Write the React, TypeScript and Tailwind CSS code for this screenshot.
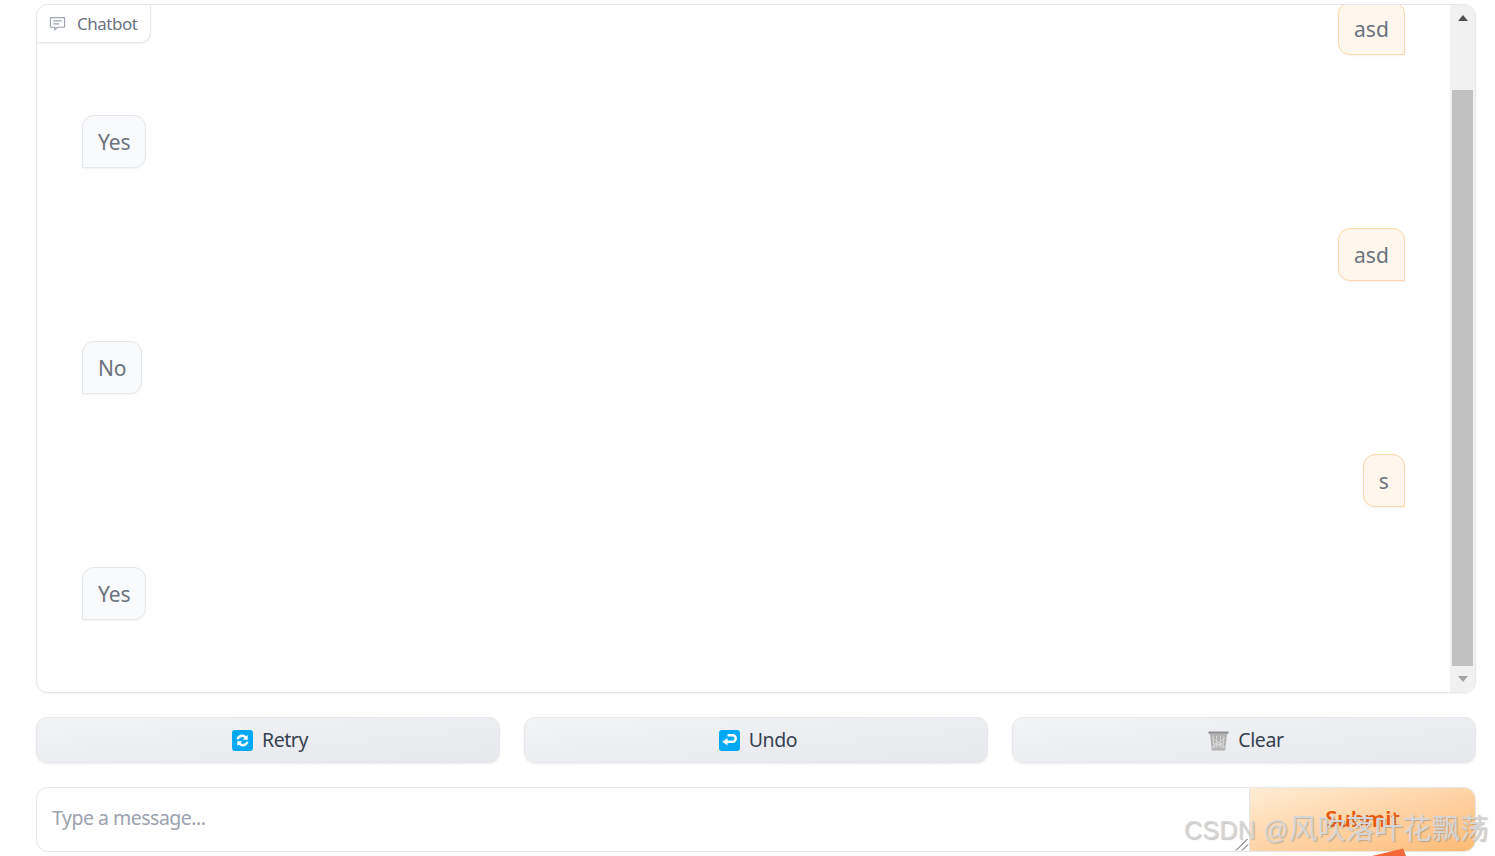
import React from "react";

const font = { fontFamily: '"Noto Sans", "Noto Sans CJK SC", sans-serif' };

function Bubble({ text, user }: { text: string; user?: boolean }) {
  return user ? (
    <div className="self-end mr-[45px] h-[53px] flex items-center px-[15px] pt-[2px] rounded-[12px] rounded-br-none border border-[#fed7aa] bg-[#fff7ed] shadow-[0_1px_2px_rgba(0,0,0,0.05)] text-[21px] text-[#6b7280] tracking-[0.1px]">
      {text}
    </div>
  ) : (
    <div className="self-start ml-[45px] h-[53px] flex items-center px-[15px] pt-[2px] rounded-[12px] rounded-bl-none border border-[#e5e7eb] bg-[#f9fafb] shadow-[0_1px_2px_rgba(0,0,0,0.05)] text-[21px] text-[#6b7280] tracking-[-0.1px]">
      {text}
    </div>
  );
}

function ChatIcon() {
  return (
    <svg width="17" height="17" viewBox="0 0 16 16" fill="none" stroke="#9ca3af" strokeWidth="1.1">
      <path d="M2 2.500h12a.7.7 0 0 1 .7.7v7.600a.7.7 0 0 1-.7.7H8l-2.600 2.400v-2.400H2a.7.7 0 0 1-.7-.7V3.200a.7.7 0 0 1 .7-.7z" />
      <path d="M4 5.500h8M4 8.300h5.500" />
    </svg>
  );
}

function RetryIcon() {
  return (
    <svg width="21" height="21" viewBox="0 0 21 21">
      <rect width="21" height="21" rx="3" fill="#03a9f4" />
      <path d="M4.500 9.300a5.800 5.800 0 0 1 9.800-3l1.400-1.300v4.800h-4.900l1.700-1.600a3.500 3.500 0 0 0-5.800 1.100z" fill="#fff" />
      <path d="M16.500 11.700a5.800 5.800 0 0 1-9.800 3l-1.400 1.300v-4.800h4.900l-1.700 1.600a3.500 3.500 0 0 0 5.800-1.100z" fill="#fff" />
    </svg>
  );
}

function UndoIcon() {
  return (
    <svg width="21" height="21" viewBox="0 0 21 21">
      <rect width="21" height="21" rx="3" fill="#03a9f4" />
      <path d="M8.500 5.200H13.500a3.300 3.300 0 0 1 0 6.600H7" fill="none" stroke="#fff" strokeWidth="2.400" />
      <path d="M8.500 8v7.600L3.300 11.800z" fill="#fff" />
    </svg>
  );
}

function TrashIcon() {
  return (
    <svg width="21" height="21" viewBox="0 0 21 21">
      <path d="M.5 1.500h20v2.300h-20z" fill="#8f8f8f" />
      <path d="M2 3.800h17l-1.700 16a1 1 0 0 1-1 .7H4.700a1 1 0 0 1-1-.7z" fill="#b0b0b0" />
      <path d="M5 5.500l1.200 13M8.500 5.500l.4 13M12.500 5.500l-.4 13M16 5.500l-1.200 13M4 8l13 9M17 8L4 17M4.500 12.500l12 5M16.500 12.500l-12 5" stroke="#dedede" strokeWidth=".8" fill="none" />
    </svg>
  );
}

function ActionButton({ icon, label }: { icon: React.ReactNode; label: string }) {
  return (
    <button className="flex-1 h-[46px] flex items-center justify-center gap-[9px] pl-[4px] rounded-[11px] border border-[#e5e7eb] bg-gradient-to-br from-[#f3f4f6] to-[#e5e7eb] shadow-[0_1px_2px_rgba(0,0,0,0.08)] text-[#374151] text-[19.5px] tracking-[-0.4px]">
      {icon}
      <span>{label}</span>
    </button>
  );
}

export default function App() {
  return (
    <div style={font} className="relative w-[1495px] h-[856px] overflow-hidden bg-white pl-[36px] pr-[19px] pt-[4px]">
      <div className="relative h-[689px] flex rounded-[12px] border border-[#e5e7eb] shadow-[0_1px_2px_rgba(0,0,0,0.05)] overflow-hidden bg-white">
        <div className="absolute left-0 top-0 h-[38px] w-[114px] flex items-center gap-[11px] pl-[12px] rounded-br-[10px] border-r border-b border-[#e5e7eb] bg-white shadow-[0_1px_2px_rgba(0,0,0,0.05)] text-[#6b7280] text-[17px] tracking-[-0.5px]">
          <ChatIcon />
          <span>Chatbot</span>
        </div>
        <div className="flex-1 flex flex-col gap-[60px] -mt-[3px] overflow-hidden">
          <Bubble text="asd" user />
          <Bubble text="Yes" />
          <Bubble text="asd" user />
          <Bubble text="No" />
          <Bubble text="s" user />
          <Bubble text="Yes" />
        </div>
        <div className="w-[25px] bg-[#f1f1f1] flex flex-col items-center">
          <div className="h-[85px] w-full pt-[10px] flex justify-center">
            <div className="w-0 h-0 border-x-[5.500px] border-x-transparent border-b-[6px] border-b-[#505050]" />
          </div>
          <div className="w-[21px] h-[576px] bg-[#c1c1c1]" />
          <div className="w-0 h-0 mt-[10px] border-x-[5.500px] border-x-transparent border-t-[6px] border-t-[#a3a3a3]" />
        </div>
      </div>

      <div className="mt-[24px] flex gap-[24px]">
        <ActionButton icon={<RetryIcon />} label="Retry" />
        <ActionButton icon={<UndoIcon />} label="Undo" />
        <ActionButton icon={<TrashIcon />} label="Clear" />
      </div>

      <div className="mt-[24px] h-[65px] flex rounded-[12px] border border-[#e5e7eb] overflow-hidden bg-white">
        <textarea
          placeholder="Type a message..."
          className="flex-1 h-full resize-none px-[15px] py-[16px] outline-none text-[19.5px] leading-[28px] tracking-[-0.5px] text-[#374151] placeholder:text-[#9ca3af]"
        />
        <button className="w-[226px] h-full flex items-center justify-center pb-[2px] bg-gradient-to-br from-[#ffedd5] to-[#fdba74] border-l border-[#e5e7eb] text-[#ea580c] text-[22px] font-semibold tracking-[-0.3px]">
          Submit
        </button>
      </div>

      <svg className="absolute left-[1235px] top-[838px]" width="14" height="13" viewBox="0 0 14 13" fill="none" stroke="#4b4b4b" strokeWidth="1">
        <path d="M1 12.500L12.500 1M7 12.500L13 6.500" />
      </svg>
      <div className="absolute left-[1184px] top-[810px] whitespace-nowrap text-[28.5px] leading-[38px] text-[#d6d6d6] [text-shadow:1px_1px_1px_rgba(110,110,110,0.4)] font-['Liberation_Sans','Noto_Sans_CJK_SC',sans-serif]">
        <span className="text-[25px] tracking-[0.3px]">CSDN @</span>风吹落叶花飘荡
      </div>
      <svg className="absolute left-[1370px] top-[848px]" width="40" height="8" viewBox="0 0 40 8">
        <path d="M2 8L33 .5 36 8z" fill="#f4683a" />
      </svg>
    </div>
  );
}
